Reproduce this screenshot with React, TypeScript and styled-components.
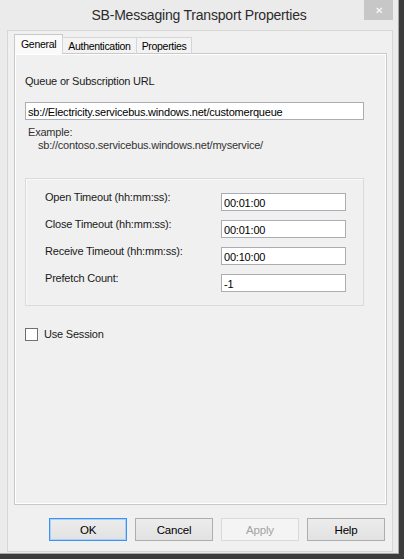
import React from "react";
import styled, { createGlobalStyle } from "styled-components";

const GlobalStyle = createGlobalStyle`
  html, body {
    margin: 0;
    padding: 0;
    background: #3c3c3c;
  }
  body {
    font-family: "Liberation Sans", Arial, sans-serif;
    font-size: 11px;
    color: #1a1a1a;
  }
`;

const timeouts = [
  { label: "Open Timeout (hh:mm:ss):", value: "00:01:00" },
  { label: "Close Timeout (hh:mm:ss):", value: "00:01:00" },
  { label: "Receive Timeout (hh:mm:ss):", value: "00:10:00" },
  { label: "Prefetch Count:", value: "-1" },
];

const App = () => {
  return (
    <>
      <GlobalStyle />
      <Window>
        <TitleBar>
          <span />
          <Title>SB-Messaging Transport Properties</Title>
          <CloseButton>✕</CloseButton>
        </TitleBar>
        <Client>
          <TabStrip>
            <Tab active>General</Tab>
            <Tab>Authentication</Tab>
            <Tab>Properties</Tab>
          </TabStrip>
          <Panel>
            <FieldLabel>Queue or Subscription URL</FieldLabel>
            <TextBox wide>sb://Electricity.servicebus.windows.net/customerqueue</TextBox>
            <Hint>
              <div>Example:</div>
              <HintUrl>sb://contoso.servicebus.windows.net/myservice/</HintUrl>
            </Hint>
            <GroupBox>
              {timeouts.map((t) => (
                <Row key={t.label}>
                  <RowLabel>{t.label}</RowLabel>
                  <TextBox>{t.value}</TextBox>
                </Row>
              ))}
            </GroupBox>
            <CheckRow>
              <CheckBox />
              <span>Use Session</span>
            </CheckRow>
          </Panel>
          <ButtonRow>
            <DialogButton focused>OK</DialogButton>
            <DialogButton>Cancel</DialogButton>
            <DialogButton disabled>Apply</DialogButton>
            <DialogButton>Help</DialogButton>
          </ButtonRow>
        </Client>
      </Window>
    </>
  );
};

export default App;

const Window = styled.div`
  width: 398px;
  height: 553px;
  background: #ebebeb;
  border-right: 1px solid #a8a8a8;
  border-bottom: 1px solid #a8a8a8;
  display: flex;
  flex-direction: column;
`;

const TitleBar = styled.div`
  height: 30px;
  display: grid;
  grid-template-columns: 1fr auto 1fr;
  align-items: start;
`;

const Title = styled.div`
  margin-top: 7px;
  font-size: 14px;
  letter-spacing: -0.2px;
  color: #2b2b2b;
`;

const CloseButton = styled.div`
  justify-self: end;
  width: 29px;
  height: 20px;
  margin-right: 5px;
  background: #c7c7c7;
  color: #ffffff;
  font-size: 10px;
  display: flex;
  align-items: center;
  justify-content: center;
`;

const Client = styled.div`
  flex: 1;
  margin: 0 5px 1px 7px;
  border: 1px solid #d6d6d6;
  background: #f0f0f0;
  display: flex;
  flex-direction: column;
  padding: 3px 5px 10px 6px;
`;

const TabStrip = styled.div`
  display: flex;
  align-items: flex-end;
  height: 20px;
  position: relative;
  z-index: 1;
  margin-bottom: -1px;
`;

const Tab = styled.div<{ active?: boolean }>`
  box-sizing: border-box;
  font-size: 10.5px;
  letter-spacing: -0.3px;
  color: #000;
  border: 1px solid ${(p) => (p.active ? "#c9c9c9" : "#d6d6d6")};
  border-bottom: ${(p) => (p.active ? "none" : "1px solid #c9c9c9")};
  background: ${(p) => (p.active ? "#fafafa" : "#f3f3f3")};
  height: ${(p) => (p.active ? "20px" : "17px")};
  padding: ${(p) => (p.active ? "3px 6px 0" : "2px 5px 0")};
  margin-left: ${(p) => (p.active ? "0" : "-1px")};
  &:first-child {
    margin-left: 0;
  }
`;

const Panel = styled.div`
  flex: 1;
  border: 1px solid #c9c9c9;
  box-shadow: inset 1px 1px 0 #ffffff, inset -1px -1px 0 #ffffff;
  background: #f0f0f0;
  padding: 21px 10px 0 10px;
  display: flex;
  flex-direction: column;
  align-items: flex-start;
  letter-spacing: -0.2px;
`;

const FieldLabel = styled.div`
  line-height: 13px;
  margin-bottom: 14px;
`;

const TextBox = styled.div<{ wide?: boolean }>`
  box-sizing: border-box;
  width: ${(p) => (p.wide ? "339px" : "125px")};
  height: 18px;
  border: 1px solid #abadb3;
  background: #ffffff;
  padding: 2px 2px 0;
  line-height: 14px;
  color: #000;
  white-space: nowrap;
`;

const Hint = styled.div`
  margin: 6px 0 0 3px;
  line-height: 13px;
  color: #333;
`;

const HintUrl = styled.div`
  padding-left: 10px;
`;

const GroupBox = styled.div`
  box-sizing: border-box;
  width: 339px;
  margin-top: 26px;
  border: 1px solid #dadada;
  box-shadow: inset 1px 1px 0 #fafafa;
  padding: 14px 17px 13px 19px;
  display: flex;
  flex-direction: column;
  gap: 9px;
`;

const Row = styled.div`
  display: flex;
  align-items: flex-start;
`;

const RowLabel = styled.div`
  width: 176px;
  line-height: 13px;
  margin-top: -2px;
`;

const CheckRow = styled.div`
  margin-top: 22px;
  display: flex;
  align-items: center;
  gap: 6px;
  line-height: 13px;
`;

const CheckBox = styled.div`
  box-sizing: border-box;
  width: 13px;
  height: 13px;
  border: 1px solid #707070;
  background: #ffffff;
`;

const ButtonRow = styled.div`
  display: flex;
  justify-content: flex-end;
  gap: 8px;
  margin-top: 13px;
  padding-right: 2px;
`;

const DialogButton = styled.div<{ focused?: boolean; disabled?: boolean }>`
  box-sizing: border-box;
  width: 78px;
  height: 23px;
  display: flex;
  align-items: center;
  justify-content: center;
  font-size: 11.5px;
  letter-spacing: -0.2px;
  color: ${(p) => (p.disabled ? "#a3a3a3" : "#000")};
  background: ${(p) =>
    p.disabled ? "#f4f4f4" : "linear-gradient(#ececec, #e2e2e2)"};
  border: 1px solid
    ${(p) => (p.focused ? "#3c93f0" : p.disabled ? "#d9d9d9" : "#adadad")};
  box-shadow: ${(p) => (p.focused ? "inset 0 0 0 1px #a8d0fa" : "none")};
`;
